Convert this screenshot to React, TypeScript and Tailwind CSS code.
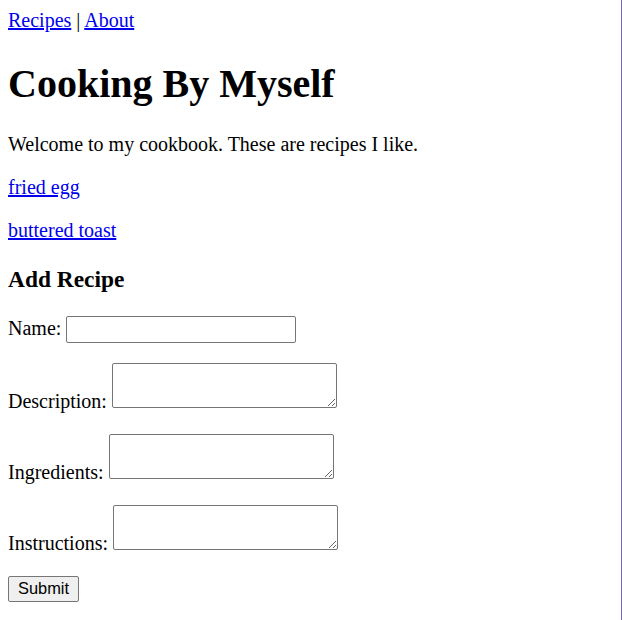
import React from "react";

export default function App() {
  const link = "text-[#0000ee] underline";
  const ta =
    "h-[45px] w-[225px] resize rounded-[2px] border border-[#767676] bg-white px-[2px] font-['Liberation_Mono',monospace] text-[16.67px]";
  return (
    <div className="min-h-[620px] w-[622px] border-r border-[#7766cc] bg-white px-2 pt-[9px] pb-2 font-['Liberation_Serif',serif] text-[20px] leading-[normal] text-black">
      <div>
        <a href="#" className={link}>
          Recipes
        </a>{" "}
        |{" "}
        <a href="#" className={link}>
          About
        </a>
      </div>
      <h1 className="mt-[27.6px] mb-[26.8px] text-[40px] font-bold">Cooking By Myself</h1>
      <p className="my-5">Welcome to my cookbook. These are recipes I like.</p>
      <p className="my-5">
        <a href="#" className={link}>
          fried egg
        </a>
      </p>
      <p className="my-5">
        <a href="#" className={link}>
          buttered toast
        </a>
      </p>
      <h3 className="my-[23.4px] text-[23.4px] font-bold">Add Recipe</h3>
      <form>
        <p className="my-5">
          Name:{" "}
          <input
            type="text"
            className="h-[27px] w-[230px] rounded-[2px] border border-[#767676] bg-white px-[2px] font-['Liberation_Sans',sans-serif] text-[16.67px]"
          />
        </p>
        <p className="mt-5 mb-[21.1px]">
          Description: <textarea className={ta} />
        </p>
        <p className="mt-5 mb-[21px]">
          Ingredients: <textarea className={ta} />
        </p>
        <p className="mt-5 mb-[20.4px]">
          Instructions: <textarea className={ta} />
        </p>
        <button
          type="button"
          className="h-[26px] w-[71px] rounded-[2px] border border-[#767676] bg-[#efefef] font-['Liberation_Sans',sans-serif] text-[16.4px] leading-none text-black"
        >
          Submit
        </button>
      </form>
    </div>
  );
}
